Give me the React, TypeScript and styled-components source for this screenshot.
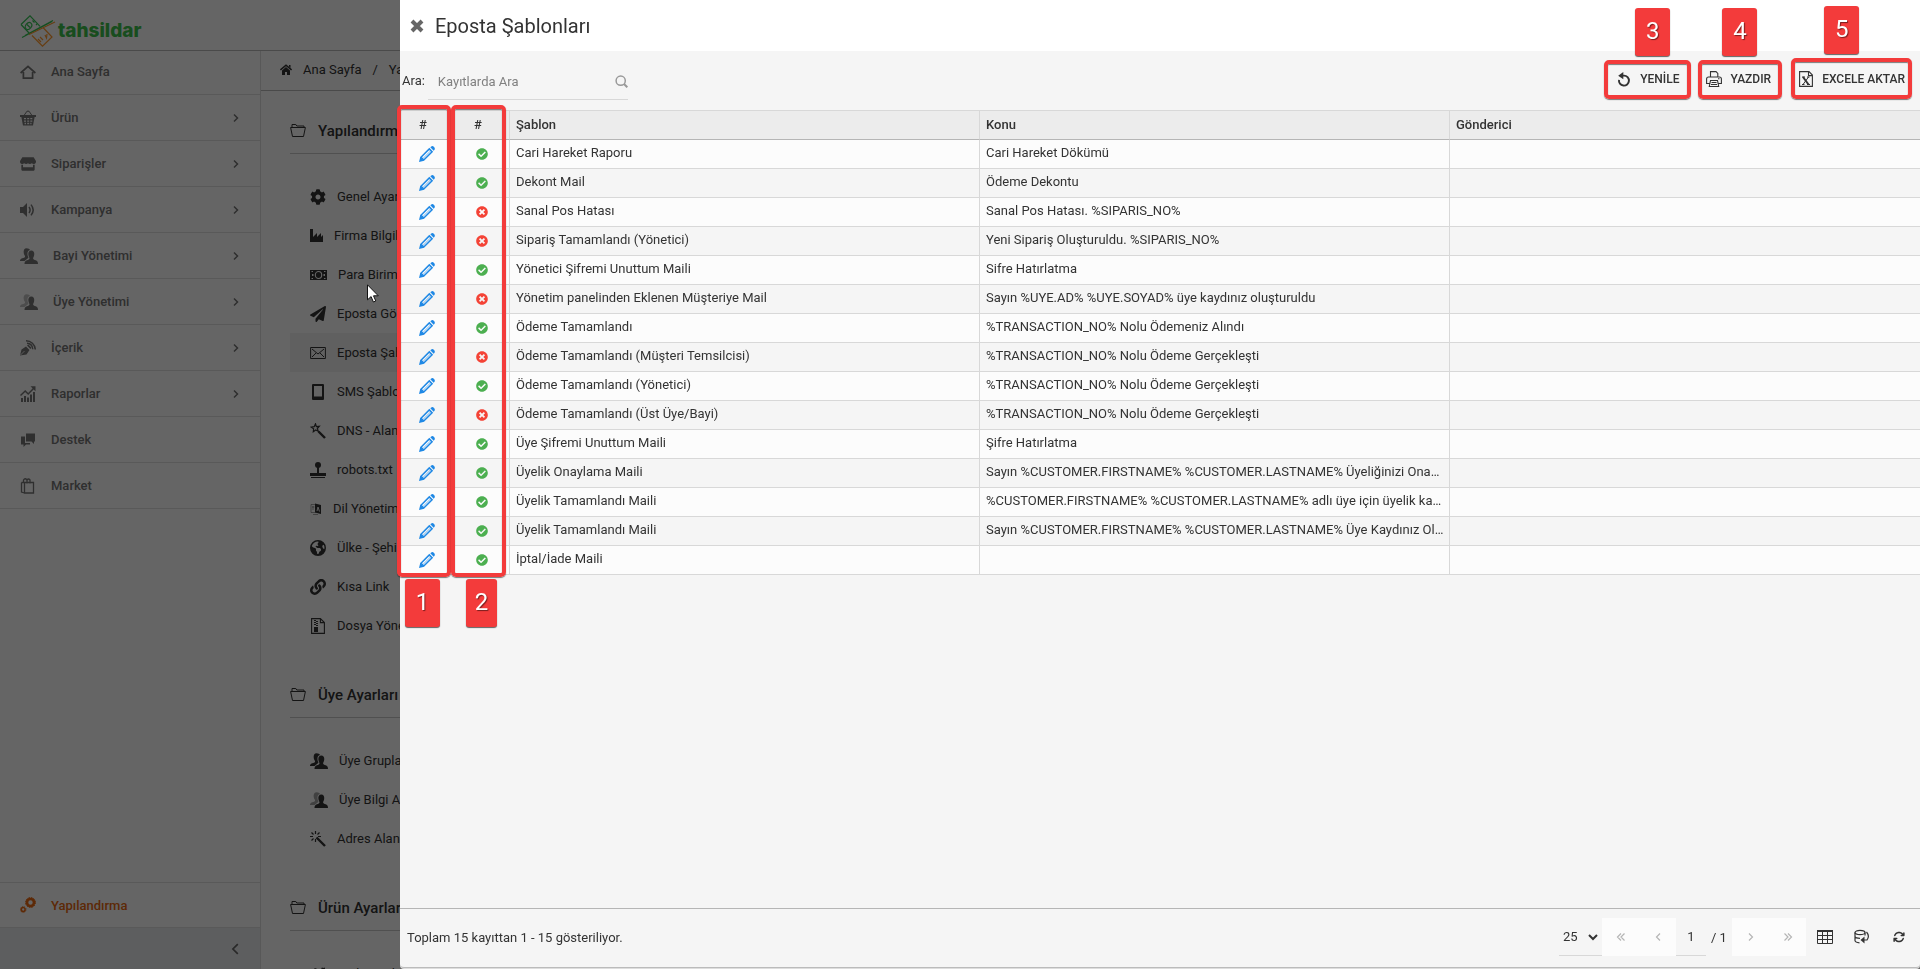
import React from "react";
import styled, { createGlobalStyle, css } from "styled-components";
import {
  FaCheckCircle, FaTimesCircle, FaCog, FaCogs, FaPaperPlane, FaStore, FaLink,
} from "react-icons/fa";
import { FaArrowsRotate, FaEarthAmericas } from "react-icons/fa6";

const Global = createGlobalStyle`
  * { box-sizing: border-box; }
  html, body { margin: 0; height: 100%; overflow: hidden; }
  body, button, input, select {
    font-family: Roboto, "Open Sans", sans-serif;
    font-size: 13px;
    color: #333;
  }
  button { border: 0; padding: 0; background: none; cursor: pointer; }
  a { color: inherit; text-decoration: none; }
  svg { display: block; flex: none; }
  #root { height: 100%; }
`;

/* ---------- icons ---------- */

type IconProps = { w?: number; h?: number; children?: React.ReactNode };
const Svg = ({ w = 16, h = 16, children }: IconProps) => (
  <svg width={w} height={h} viewBox={`0 0 ${w} ${h}`} fill="currentColor" stroke="none" aria-hidden="true">
    {children}
  </svg>
);
const line = (width = 1) => ({ fill: "none", stroke: "currentColor", strokeWidth: width });

const HomeIcon = () => (
  <Svg><path d="M.6 9 8 2.4 15.4 9M3.4 8v6.2h9.2V8" {...line(1.7)} /></Svg>
);
const BasketIcon = () => (
  <Svg>
    <path d="M4 5.5 7 1.2h2L12 5.5" {...line(1)} />
    <path d="M0 5h16v2H0z" />
    <path d="M1.4 7h13.2L13 15.6H3z" />
    <path d="M4 8.7h2M7.2 8.7h2M10.3 8.7h2M4 11.2h2M7.2 11.2h2M10.3 11.2h2M4.6 13.5H6M7.2 13.5h2M10.3 13.5h1.2" stroke="#fff" strokeWidth="1.3" />
  </Svg>
);
const SpeakerIcon = () => (
  <Svg w={16}>
    <path d="M0 5h3l4-4v14l-4-4H0z" />
    <path d="M9 5q2.2 3 0 6M11 2.6q4.4 5.4 0 10.8" {...line(1.5)} />
  </Svg>
);
const UsersIcon = ({ faded = false }: { faded?: boolean }) => (
  <Svg w={18}>
    <path opacity={faded ? 0.45 : 1} d="M6.5.3C8.500.3 9.500 1 10 2 8 2.500 7.300 4 7.500 6.500c.1 1.500.8 2.500 1 3.300L4.500 13H0c0-1.800 1-2.400 4.500-3.500.8-.4.700-1.200.2-1.900C3 5 3.200.3 6.500.3z" />
    <path d="M11.300 2.500c2.200 0 3.200 1.700 2.900 4.200-.1 1.500-.9 2.500-1.100 3.500 0 1.300 1.200 1.500 2.600 2 1.500.6 2.300 1.400 2.300 3.800H4.500c0-2.400.9-3.200 2.400-3.800 1.400-.5 2.600-.7 2.600-2-.2-1-1-2-1.100-3.500-.3-2.500.7-4.200 2.900-4.200z" />
  </Svg>
);
const BlogIcon = () => (
  <Svg>
    <path d="M0 15.500 1.500 9.500 6 6.500l3.500 3.500-3 4.500zM7 5.600l1.300-1 3.200 3.200-1.100 1.200z" />
    <path d="m.5 15 4-4" stroke="#fff" strokeWidth=".8" />
    <path d="M7 3.300c3 .2 5.500 2.500 5.800 6M6 .8c5 0 9 3.700 9.300 8.700" {...line(1.500)} />
  </Svg>
);
const ReportIcon = () => (
  <Svg>
    <path d="M1 12h2v4H1zM4 10h2v6H4zM7 11.500h2V16H7zM10 8.500h2V16h-2zM13 6h2v10h-2z" />
    <path d="m.5 9.500 4.700-4.500 3 3L14 2" {...line(1.500)} />
    <path d="M10.500.3H15.500v5z" />
  </Svg>
);
const ChatIcon = () => (
  <Svg>
    <path d="M6 1.500h9v8h-1V12l-2.500-2.500H6z" />
    <path d="M1 4.500h4V11h5v1.500H6L3.500 15v-2.500H1z" />
  </Svg>
);
const BagIcon = () => (
  <Svg>
    <path d="M4.500 4.500h9V15h-9zM1.500 4.500h3M1.500 4.500V14l3 1M3.500 4V2q1.500-2.500 3.500 0v3.500M7 4V2q1.500-2 3 0v3.500" {...line(1.300)} />
  </Svg>
);
const FolderIcon = () => (
  <Svg>
    <path d="M2 4.500V1.500h3.800l1 1.500H14v1.500M.6 4.500h14.800L13.500 13.500h-11z" {...line(1)} />
  </Svg>
);
const FactoryIcon = () => <Svg w={13} h={14}><path d="M0 0h3v8l4-4v4l4-4v4l2-2v7H0z" /></Svg>;
const MoneyIcon = () => (
  <Svg w={17} h={12}>
    <path d="M0 1h17v10H0z" />
    <ellipse cx="8.500" cy="6" rx="3.200" ry="3.500" fill="none" stroke="#fff" strokeWidth="1.100" />
    <path d="M2 5h1.500v2H2zM13.500 5H15v2h-1.500zM1.500 2H3v1H1.500zM14 2h1.500v1H14zM1.500 9H3v1H1.500zM14 9h1.500v1H14z" fill="#fff" />
  </Svg>
);
const MailIcon = () => (
  <Svg><path d="M.6 2.500h14.800v11H.6zM2 4l6 5 6-5M2 12l4-4M14 12l-4-4" {...line(1)} /></Svg>
);
const TabletIcon = () => <Svg><path d="M3 0h10q1 0 1 1v14q0 1-1 1H3q-1 0-1-1V1q0-1 1-1zm1 2v10.500h8V2z" fillRule="evenodd" /></Svg>;
const StarWandIcon = () => (
  <Svg>
    <path d="m5.500.8.800 2.700 3-.2-2 2.200 1 2.800-2.600-1.300-2.400 1.800.3-3L1.200 4.200l3-.5z" {...line(1.200)} />
    <path d="m8.500 8.500 6.500 6.500" {...line(2.400)} />
  </Svg>
);
const StampIcon = () => (
  <Svg>
    <circle cx="8" cy="3" r="3" />
    <path d="M7 5h2v6h7v3H0v-3h7zM1 15h14v1H1z" />
  </Svg>
);
const LanguageIcon = () => (
  <Svg w={12} h={14}>
    <path d="M1 2.500h4.500v8H1zM3 12.500h5M2 5h2.500M3 4v4" {...line(.7)} opacity=".6" />
    <path d="M5 1.500 11 3v9L5 10.500z" />
    <path d="m7 9 1-4 1.500 4.500" stroke="#fff" fill="none" strokeWidth=".9" />
  </Svg>
);
const ZipIcon = () => (
  <Svg>
    <path d="M1.600.6h8.800l4 4v10.800H1.600zM10.400.6v4h4" {...line(1.100)} />
    <path d="M4 2h2v1H4zM6 3h2v1H6zM4 4h2v1H4zM6 5h2v1H6zM4 6h2v1H4zM6 7h2v1H6zM4 9h4v5H4z" />
  </Svg>
);
const SparkWandIcon = () => (
  <Svg>
    <path d="M5.500 0v3M0 5.500h3M1.500 1.500l2 2M9.500 1.500l-2 2M1.500 9.500l2-2M5.500 8v3M8 5.500h3" {...line(1.200)} />
    <path d="m6.500 6.500 8.500 8.500" {...line(2.400)} />
  </Svg>
);
const SmallHomeIcon = () => (
  <Svg w={12} h={12}>
    <path d="M.4 6 6 1.200 11.600 6" {...line(1.600)} />
    <path d="M2 6.500 6 3l4 3.500V11H7V8H5v3H2zM9 1h1.500v3L9 2.500z" />
  </Svg>
);
const GearsIcon = () => (
  <Svg>
    <circle cx="10.500" cy="5.500" r="3.500" {...line(2.600)} />
    <circle cx="10.500" cy="5.500" r="5" {...line(1)} strokeDasharray="1.600 1" />
    <circle cx="3.200" cy="12.500" r="1.900" {...line(1.500)} />
    <circle cx="3.200" cy="12.500" r="2.900" {...line(.8)} strokeDasharray="1.200 .8" />
  </Svg>
);
const PencilIcon = () => (
  <Svg>
    <path d="M0 16 1.300 10.800 5.200 14.700z" />
    <path d="M2 11.200 10.300 2.900 13.100 5.700 4.800 14z" {...line(1.500)} />
    <path d="m4 12.500 7.700-7.700" {...line(.6)} />
    <path d="m11.300 1.300.9-.8q1.500-1 2.800.4 1.400 1.400.5 2.900l-.8.9z" />
  </Svg>
);
const UndoIcon = () => (
  <Svg>
    <path d="M3 8.800A5 5 0 1 0 8 4.600H5.500" {...line(1.900)} />
    <path d="M2.200 4.800 7.300 1v7.300z" />
  </Svg>
);
const PrinterIcon = () => (
  <Svg>
    <path d="M4.500 6V.6h5.500l1.800 1.800V6M3.500 12.500H.6V8q0-2 2-2h10.800q2 0 2 2v4.500h-2.900M4.500 9.500h7l1.200 6H3.300zM5.500 11.500h5M5 13.500h6M12 7.800h1.500" {...line(1.100)} />
  </Svg>
);
const ExcelIcon = () => (
  <Svg>
    <path d="M1.600.6H11l3.400 3.400v11.400H1.600zM10.500.6v4h4" {...line(1.100)} />
    <path d="m5 6 5.500 7.500" {...line(2)} />
    <path d="M10.500 6 5 13.500M4 6h3M9 6h2.500M4 13.500h2.500M9 13.500h3" {...line(1)} />
  </Svg>
);
const SearchIcon = () => (
  <Svg w={13} h={13}><circle cx="5.700" cy="5.700" r="4.600" {...line(1.500)} /><path d="m9 9 3.300 3.300" {...line(2)} /></Svg>
);
const GridIcon = () => (
  <Svg h={14}>
    <path d="M0 0h16v2H0z" />
    <path d="M.5 1v12.500h15V1M.5 5.500h15M.5 9.500h15M5.500 1v12.500M10.500 1v12.500" {...line(1)} />
  </Svg>
);
const DatabaseIcon = () => (
  <Svg>
    <ellipse cx="6" cy="3.500" rx="5" ry="2.200" {...line(1.200)} />
    <path d="M1 3.500v8.200c.3 1.200 2 2 4.500 2.200M11 3.500v3M1 7.500c.5 1.200 2.500 1.800 5 1.800M12.500 3q3.500 4 .5 8H9" {...line(1.200)} />
    <path d="M6.500 11 10.500 7.500v7z" />
  </Svg>
);
const Chevron = ({ dir = "right", size = 10, weight = 1.500 }: { dir?: "left" | "right" | "down"; size?: number; weight?: number }) => (
  <svg width={size} height={size} viewBox="0 0 10 10" fill="none" stroke="currentColor" strokeWidth={weight} aria-hidden="true">
    <path d={dir === "right" ? "m3 1.500 3.500 3.500-3.500 3.500" : dir === "left" ? "M7 1.500 3.500 5l3.500 3.500" : "m1 3 4 4 4-4"} />
  </svg>
);
const DoubleChevron = ({ flip = false }: { flip?: boolean }) => (
  <Svg w={10} h={10}><path d={flip ? "m1.500 1.500 3.500 3.500-3.500 3.500M5 1.500 8.500 5 5 8.500" : "M5 1.500 1.500 5 5 8.500M8.500 1.500 5 5l3.500 3.500"} {...line(1.200)} /></Svg>
);
const LogoMark = () => (
  <svg width="36" height="32" viewBox="0 0 36 32" fill="none" aria-hidden="true">
    <g stroke="#35c354" strokeWidth="1.200">
      <path d="M1 9.500 10 .8l10 10.500M1 9.500l8.500 9M2 22.500 32 6.500M5 20.500l28-15" />
      <ellipse cx="8.500" cy="11" rx="2.800" ry="3.800" transform="rotate(40 8.500 11)" />
      <path d="m7 9.500 3 3M12.500 5.500l2 2M16 9l1 1" />
    </g>
    <g stroke="#ff9a2e" strokeWidth="1.200">
      <path d="M12 20.500 22.500 31.200 32 22 23 12.500M9 19.500 35 7M18 24l3 3M20 22l3 3M25 20l1.500 3 .5-4" />
    </g>
  </svg>
);

/* ---------- page behind the drawer ---------- */

const Page = styled.div`
  height: 100vh;
  display: flex;
  flex-direction: column;
  background: #fdfdfd;
  overflow: hidden;
`;
const TopBar = styled.header`
  height: 51px;
  flex: none;
  display: flex;
  padding: 15px 20px 0;
  border-bottom: 1px solid #b8b8b8;
`;
const Brand = styled.a`
  display: flex;
  height: 32px;
  gap: 2px;
  align-items: center;
  color: #3dc04c;
  font: 800 19px/32px Inter, sans-serif;
`;
const Body = styled.div`
  flex: 1;
  min-height: 0;
  display: flex;
`;
const Sidebar = styled.nav`
  width: 261px;
  flex: none;
  display: flex;
  flex-direction: column;
  border-right: 1px solid #dcdcdc;
`;
const NavItem = styled.a<{ $active?: boolean; $first?: boolean }>`
  height: ${(p) => (p.$first ? 44 : 46)}px;
  flex: none;
  display: flex;
  align-items: center;
  gap: 15px;
  padding: ${(p) => (p.$first ? "0 19px 2px 20px" : "0 19px 0 20px")};
  border-bottom: 1px solid #dedede;
  font-weight: 500;
  color: ${(p) => (p.$active ? "#e8670f" : "#757575")};
  ${(p) => p.$active && css`margin-top: auto; border-top: 1px solid #dedede;`}
`;
const NavLabel = styled.span`flex: 1;`;
const Collapse = styled.button`
  height: 41px;
  flex: none;
  display: flex;
  align-items: center;
  justify-content: flex-end;
  padding-right: 18px;
  background: #e9ebee;
  color: #666;
`;
const Content = styled.main`
  flex: 1;
  min-width: 0;
`;
const Breadcrumb = styled.div`
  height: 40px;
  display: flex;
  align-items: center;
  gap: 11px;
  padding: 0 19px 2px;
  border-bottom: 1px solid #b8b8b8;
`;
const Section = styled.section`
  padding: 0 29px;
  & + & { padding-top: 10px; }
`;
const SectionTitle = styled.h2`
  height: 63px;
  margin: 0 0 23px;
  padding-top: 18px;
  display: flex;
  align-items: center;
  gap: 12px;
  border-bottom: 1px solid #c8c8c8;
  font-size: 15px;
  font-weight: 500;
`;
const MenuLink = styled.a<{ $current?: boolean }>`
  height: 39px;
  display: flex;
  align-items: center;
  gap: 11px;
  padding-left: 20px;
  white-space: nowrap;
  background: ${(p) => (p.$current ? "#f0f0f0" : "none")};
`;
const Shade = styled.div`
  position: fixed;
  inset: 0;
  background: rgba(0, 0, 0, 0.6);
`;
const Pointer = styled.svg`
  position: fixed;
  left: 367px;
  top: 284px;
`;

/* ---------- drawer ---------- */

const Drawer = styled.section`
  position: fixed;
  inset: 0 0 1px 400px;
  display: flex;
  flex-direction: column;
  background: #f5f5f5;
  border-bottom: 1px solid #bbb;
  border-radius: 0 0 4px 4px;
  box-shadow: 0 1px 0 #ddd;
`;
const DrawerHeader = styled.header`
  height: 51px;
  flex: none;
  display: flex;
  align-items: center;
  gap: 11px;
  padding: 0 10px;
  background: #fff;
`;
const CloseButton = styled.button`
  color: #666;
  font-size: 0;
`;
const Title = styled.h1`
  margin: 0;
  font-size: 20px;
  font-weight: 400;
`;
const Toolbar = styled.div`
  height: 59px;
  flex: none;
  display: flex;
  justify-content: space-between;
  padding: 0 7px 0 2px;
`;
const SearchLabel = styled.label`
  display: flex;
  align-items: center;
  gap: 3px;
`;
const SearchBox = styled.span`
  width: 200px;
  height: 36px;
  margin-top: 3px;
  display: flex;
  align-items: center;
  border-bottom: 1px solid #d8d8d8;
  color: #999;
`;
const SearchInput = styled.input`
  flex: 1;
  min-width: 0;
  border: 0;
  outline: 0;
  padding: 0 10px;
  background: none;
  &::placeholder { color: #808080; opacity: 1; }
`;
const Actions = styled.div`
  display: flex;
  gap: 11px;
  padding-top: 12px;
`;
const Action = styled.button`
  position: relative;
  height: 31px;
  display: flex;
  align-items: center;
  gap: 8px;
  padding: 0 8px;
  font-weight: 500;
  font-size: 12px;
`;
const TableArea = styled.div`
  position: relative;
  flex: none;
`;
const Table = styled.table`
  width: 100%;
  table-layout: fixed;
  border-collapse: separate;
  border-spacing: 0;
`;
const NarrowCol = styled.col`width: 55px;`;
const Th = styled.th<{ $mark?: boolean }>`
  height: 30px;
  padding: ${(p) => (p.$mark ? "0 8px 0 0" : "0 6px")};
  text-align: ${(p) => (p.$mark ? "center" : "left")};
  font-weight: 500;
  line-height: 20px;
  background: #ececec;
  border: solid #d8d8d8;
  border-width: 1px 1px 1px 0;
  border-bottom-color: #b5b5b5;
  &:last-child { border-right: 0; }
`;
const Td = styled.td<{ $icon?: boolean }>`
  height: 29px;
  padding: ${(p) => (p.$icon ? "0" : "0 4px 2px 6px")};
  line-height: 20px;
  white-space: nowrap;
  overflow: hidden;
  text-overflow: ellipsis;
  border: solid #d8d8d8;
  border-width: 0 1px 1px 0;
  &:last-child { border-right: 0; }
`;
const Tr = styled.tr`
  background: #fcfcfc;
  &:nth-child(even) { background: #f5f5f5; }
`;
const EditButton = styled.button`
  display: block;
  margin: 0 auto;
  color: #1e88e5;
`;
const Status = styled.span<{ $ok: boolean }>`
  display: flex;
  justify-content: center;
  font-size: 12px;
  color: ${(p) => (p.$ok ? "#4caf50" : "#f44336")};
`;
const Pager = styled.footer`
  height: 59px;
  flex: none;
  margin-top: auto;
  display: flex;
  align-items: center;
  border-top: 1px solid #b5b5b5;
  padding: 0 3px 2px 7px;
`;
const PagerInfo = styled.span`flex: 1;`;
const SelectWrap = styled.span`
  width: 43px;
  height: 37px;
  display: flex;
  align-items: center;
  border-bottom: 1px solid #d8d8d8;
  & > svg { margin-left: -14px; pointer-events: none; }
`;
const PageSize = styled.select`
  width: 43px;
  appearance: none;
  border: 0;
  outline: 0;
  padding: 0 0 0 4px;
  background: none;
`;
const PageInput = styled.input`
  width: 30px;
  height: 38px;
  border: 0;
  border-bottom: 1px solid #d8d8d8;
  outline: 0;
  padding: 0;
  text-align: center;
  background: none;
`;
const PageCount = styled.span`
  width: 26px;
  padding-left: 5px;
`;
const StepButton = styled.button`
  width: 37px;
  height: 38px;
  display: grid;
  place-items: center;
  background: #fcfcfc;
  color: #b5b5b5;
`;
const ToolButton = styled.button`
  width: 37px;
  height: 38px;
  display: grid;
  place-items: center;
`;

/* ---------- numbered callouts ---------- */

const Frame = styled.span<{ $top: number; $right?: number; $bottom: number; $left: number; $width?: number }>`
  position: absolute;
  top: ${(p) => p.$top}px;
  bottom: ${(p) => p.$bottom}px;
  left: ${(p) => p.$left}px;
  ${(p) => (p.$width ? `width: ${p.$width}px;` : `right: ${p.$right}px;`)}
  border: 4px solid #f33b3b;
  border-radius: 5px;
  box-shadow: 0 1px 1px rgba(0, 0, 0, 0.5), inset 0 1px 1px rgba(0, 0, 0, 0.5);
  pointer-events: none;
`;
const Badge = styled.span<{ $below?: boolean; $left: number; $narrow?: boolean }>`
  position: absolute;
  left: ${(p) => p.$left}px;
  ${(p) => (p.$below ? "top: calc(100% + 6px);" : "bottom: calc(100% + 8px);")}
  width: ${(p) => (p.$narrow ? 31 : 35)}px;
  height: 48px;
  border-radius: 3px;
  background: #f33b3b;
  box-shadow: 0 1px 1px rgba(0, 0, 0, 0.6);
  color: #fff;
  font: 400 24px/46px Roboto, sans-serif;
  text-align: center;
  text-shadow: 1px 1px 1px rgba(0, 0, 0, 0.5);
`;

/* ---------- data ---------- */

const nav: [string, React.ReactNode, boolean][] = [
  ["Ana Sayfa", <HomeIcon />, false],
  ["Ürün", <BasketIcon />, true],
  ["Siparişler", <FaStore size={16} />, true],
  ["Kampanya", <SpeakerIcon />, true],
  ["Bayi Yönetimi", <UsersIcon />, true],
  ["Üye Yönetimi", <UsersIcon faded />, true],
  ["İçerik", <BlogIcon />, true],
  ["Raporlar", <ReportIcon />, true],
  ["Destek", <ChatIcon />, false],
  ["Market", <BagIcon />, false],
];

const sections: { title: string; items: [string, React.ReactNode][] }[] = [
  {
    title: "Yapılandırma",
    items: [
      ["Genel Ayarlar", <FaCog size={16} />],
      ["Firma Bilgileri", <FactoryIcon />],
      ["Para Birimleri", <MoneyIcon />],
      ["Eposta Gönderimi", <FaPaperPlane size={16} />],
      ["Eposta Şablonları", <MailIcon />],
      ["SMS Şablonları", <TabletIcon />],
      ["DNS - Alan Adı", <StarWandIcon />],
      ["robots.txt", <StampIcon />],
      ["Dil Yönetimi", <LanguageIcon />],
      ["Ülke - Şehir", <FaEarthAmericas size={16} />],
      ["Kısa Link", <FaLink size={16} />],
      ["Dosya Yönetimi", <ZipIcon />],
    ],
  },
  {
    title: "Üye Ayarları",
    items: [
      ["Üye Grupları", <UsersIcon />],
      ["Üye Bilgi Alanları", <UsersIcon faded />],
      ["Adres Alanları", <SparkWandIcon />],
    ],
  },
  { title: "Ürün Ayarları", items: [["Stok Ayarları", <FaCogs size={16} />]] },
];

const rows: [boolean, string, string][] = [
  [true, "Cari Hareket Raporu", "Cari Hareket Dökümü"],
  [true, "Dekont Mail", "Ödeme Dekontu"],
  [false, "Sanal Pos Hatası", "Sanal Pos Hatası. %SIPARIS_NO%"],
  [false, "Sipariş Tamamlandı (Yönetici)", "Yeni Sipariş Oluşturuldu. %SIPARIS_NO%"],
  [true, "Yönetici Şifremi Unuttum Maili", "Sifre Hatırlatma"],
  [false, "Yönetim panelinden Eklenen Müşteriye Mail", "Sayın %UYE.AD% %UYE.SOYAD% üye kaydınız oluşturuldu"],
  [true, "Ödeme Tamamlandı", "%TRANSACTION_NO% Nolu Ödemeniz Alındı"],
  [false, "Ödeme Tamamlandı (Müşteri Temsilcisi)", "%TRANSACTION_NO% Nolu Ödeme Gerçekleşti"],
  [true, "Ödeme Tamamlandı (Yönetici)", "%TRANSACTION_NO% Nolu Ödeme Gerçekleşti"],
  [false, "Ödeme Tamamlandı (Üst Üye/Bayi)", "%TRANSACTION_NO% Nolu Ödeme Gerçekleşti"],
  [true, "Üye Şifremi Unuttum Maili", "Şifre Hatırlatma"],
  [true, "Üyelik Onaylama Maili", "Sayın %CUSTOMER.FIRSTNAME% %CUSTOMER.LASTNAME% Üyeliğinizi Ona…"],
  [true, "Üyelik Tamamlandı Maili", "%CUSTOMER.FIRSTNAME% %CUSTOMER.LASTNAME% adlı üye için üyelik ka…"],
  [true, "Üyelik Tamamlandı Maili", "Sayın %CUSTOMER.FIRSTNAME% %CUSTOMER.LASTNAME% Üye Kaydınız Ol…"],
  [true, "İptal/İade Maili", ""],
];

export default function App() {
  return (
    <>
      <Global />
      <Page>
        <TopBar>
          <Brand href="#"><LogoMark />tahsildar</Brand>
        </TopBar>
        <Body>
          <Sidebar>
            {nav.map(([label, icon, open], i) => (
              <NavItem href="#" key={label} $first={i === 0}>
                {icon}
                <NavLabel>{label}</NavLabel>
                {open && <Chevron />}
              </NavItem>
            ))}
            <NavItem href="#" $active>
              <GearsIcon />
              <NavLabel>Yapılandırma</NavLabel>
            </NavItem>
            <Collapse aria-label="Menüyü daralt"><Chevron dir="left" size={14} weight={1.200} /></Collapse>
          </Sidebar>
          <Content>
            <Breadcrumb>
              <SmallHomeIcon />
              <a href="#">Ana Sayfa</a>
              <span>/</span>
              <a href="#">Yapılandırma</a>
            </Breadcrumb>
            {sections.map((s) => (
              <Section key={s.title}>
                <SectionTitle><FolderIcon />{s.title}</SectionTitle>
                {s.items.map(([label, icon]) => (
                  <MenuLink href="#" key={label} $current={label === "Eposta Şablonları"}>
                    {icon}
                    {label}
                  </MenuLink>
                ))}
              </Section>
            ))}
          </Content>
        </Body>
      </Page>
      <Shade />

      <Drawer>
        <DrawerHeader>
          <CloseButton aria-label="Kapat">
            <svg width="14" height="14" viewBox="0 0 14 14" stroke="currentColor" strokeWidth="4"><path d="m2 2 10 10M12 2 2 12" /></svg>
          </CloseButton>
          <Title>Eposta Şablonları</Title>
        </DrawerHeader>
        <Toolbar>
          <SearchLabel>
            Ara:
            <SearchBox>
              <SearchInput placeholder="Kayıtlarda Ara" />
              <SearchIcon />
            </SearchBox>
          </SearchLabel>
          <Actions>
            <Action>
              <UndoIcon />YENİLE
              <Frame $top={-3} $right={-4} $bottom={-5} $left={-4}><Badge $left={27}>3</Badge></Frame>
            </Action>
            <Action>
              <PrinterIcon />YAZDIR
              <Frame $top={-3} $right={-3} $bottom={-5} $left={0}><Badge $left={20}>4</Badge></Frame>
            </Action>
            <Action>
              <ExcelIcon />EXCELE AKTAR
              <Frame $top={-5} $right={1} $bottom={-5} $left={1}><Badge $left={29}>5</Badge></Frame>
            </Action>
          </Actions>
        </Toolbar>
        <TableArea>
          <Table>
            <colgroup><NarrowCol /><NarrowCol /><col /><col /><col /></colgroup>
            <thead>
              <tr>
                <Th $mark>#</Th>
                <Th $mark>#</Th>
                <Th>Şablon</Th>
                <Th>Konu</Th>
                <Th>Gönderici</Th>
              </tr>
            </thead>
            <tbody>
              {rows.map(([ok, name, subject], i) => (
                <Tr key={i}>
                  <Td $icon><EditButton aria-label="Düzenle"><PencilIcon /></EditButton></Td>
                  <Td $icon><Status $ok={ok}>{ok ? <FaCheckCircle /> : <FaTimesCircle />}</Status></Td>
                  <Td>{name}</Td>
                  <Td>{subject}</Td>
                  <Td />
                </Tr>
              ))}
            </tbody>
          </Table>
          <Frame $top={-5} $bottom={-2} $left={-3} $width={54}><Badge $below $left={4}>1</Badge></Frame>
          <Frame $top={-5} $bottom={-2} $left={51} $width={55}><Badge $below $narrow $left={11}>2</Badge></Frame>
        </TableArea>
        <Pager>
          <PagerInfo>Toplam 15 kayıttan 1 - 15 gösteriliyor.</PagerInfo>
          <SelectWrap>
            <PageSize aria-label="Sayfa boyutu" defaultValue="25"><option>25</option><option>50</option></PageSize>
            <Chevron dir="down" weight={2} />
          </SelectWrap>
          <StepButton aria-label="İlk sayfa"><DoubleChevron /></StepButton>
          <StepButton aria-label="Önceki sayfa"><Chevron dir="left" weight={1.200} /></StepButton>
          <PageInput aria-label="Sayfa" defaultValue="1" />
          <PageCount>/ 1</PageCount>
          <StepButton aria-label="Sonraki sayfa"><Chevron weight={1.200} /></StepButton>
          <StepButton aria-label="Son sayfa"><DoubleChevron flip /></StepButton>
          <ToolButton aria-label="Sütunlar"><GridIcon /></ToolButton>
          <ToolButton aria-label="Verileri sıfırla"><DatabaseIcon /></ToolButton>
          <ToolButton aria-label="Tabloyu yenile"><FaArrowsRotate size={12} /></ToolButton>
        </Pager>
      </Drawer>
      <Pointer width="12" height="19" viewBox="0 0 12 19" fill="#fff" stroke="#111" aria-hidden="true">
        <path d="M.5.8v15l3.600-3.200 2.300 5.400 2.400-1-2.300-5.200h4.800z" />
      </Pointer>
    </>
  );
}
